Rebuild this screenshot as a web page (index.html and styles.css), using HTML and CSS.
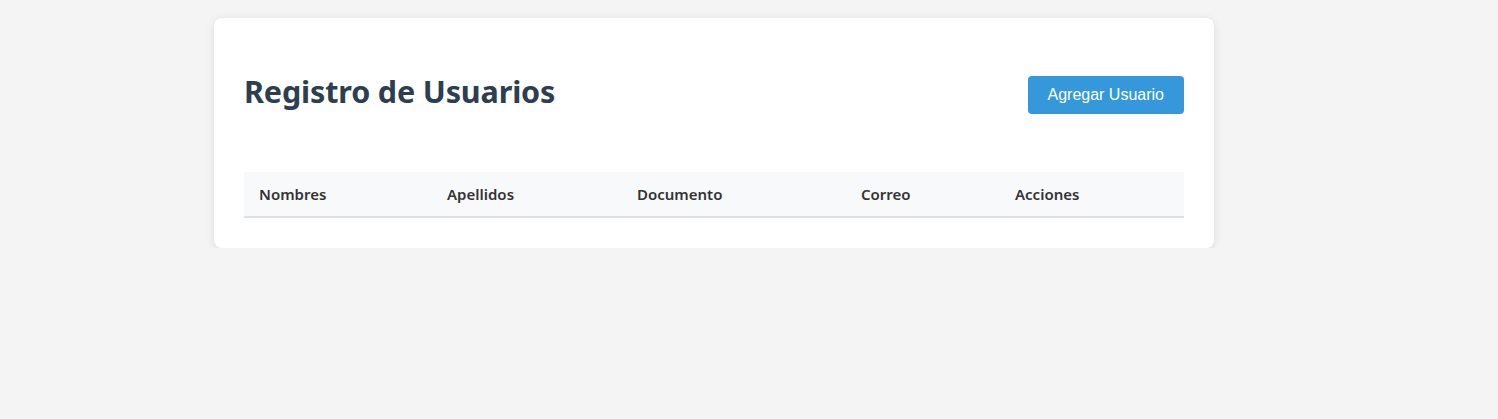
FILE: index.html
```html
<!DOCTYPE html>
<html lang="es">
<head>
<meta charset="utf-8">
<title>Registro de Usuarios</title>
<link rel="stylesheet" href="styles.css">
</head>
<body>
<div class="container">
  <div class="header">
    <h1 class="title">Registro de Usuarios</h1>
    <button class="btn-add">Agregar Usuario</button>
  </div>
  <table class="users">
    <colgroup>
      <col class="c1"><col class="c2"><col class="c3"><col class="c4"><col class="c5">
    </colgroup>
    <thead>
      <tr>
        <th>Nombres</th>
        <th>Apellidos</th>
        <th>Documento</th>
        <th>Correo</th>
        <th>Acciones</th>
      </tr>
    </thead>
    <tbody></tbody>
  </table>
</div>
</body>
</html>
```

FILE: styles.css
```css
html, body {
  margin: 0;
  padding: 0;
}
body {
  background: #f4f4f4;
  font-family: "Noto Sans", "Open Sans", sans-serif;
  padding: 18px 0 0 214px;
}
.container {
  width: 1000px;
  box-sizing: border-box;
  background: #fff;
  border-radius: 8px;
  box-shadow: 0 2px 10px rgba(0, 0, 0, 0.1);
  padding: 30px;
}
.header {
  display: flex;
  justify-content: space-between;
  align-items: center;
  height: 94px;
  margin-bottom: 30px;
}
.title {
  margin: 0 0 8px 0;
  font-size: 30.5px;
  font-weight: 700;
  color: #2c3e50;
  letter-spacing: -0.15px;
}
.btn-add {
  font-family: "Liberation Sans", Arial, sans-serif;
  font-size: 16px;
  color: #fff;
  background: #3498db;
  border: none;
  border-radius: 4px;
  height: 38px;
  padding: 0 20px;
}
.users {
  width: 100%;
  border-collapse: collapse;
}
.c1 { width: 188px; }
.c2 { width: 190px; }
.c3 { width: 224px; }
.c4 { width: 154px; }
.c5 { width: 184px; }
.users th {
  text-align: left;
  background: #f8f9fa;
  color: #333;
  font-size: 15px;
  font-weight: 600;
  height: 45px;
  padding: 0 15px;
  border-bottom: 2px solid #dee2e6;
  box-sizing: border-box;
}
```
